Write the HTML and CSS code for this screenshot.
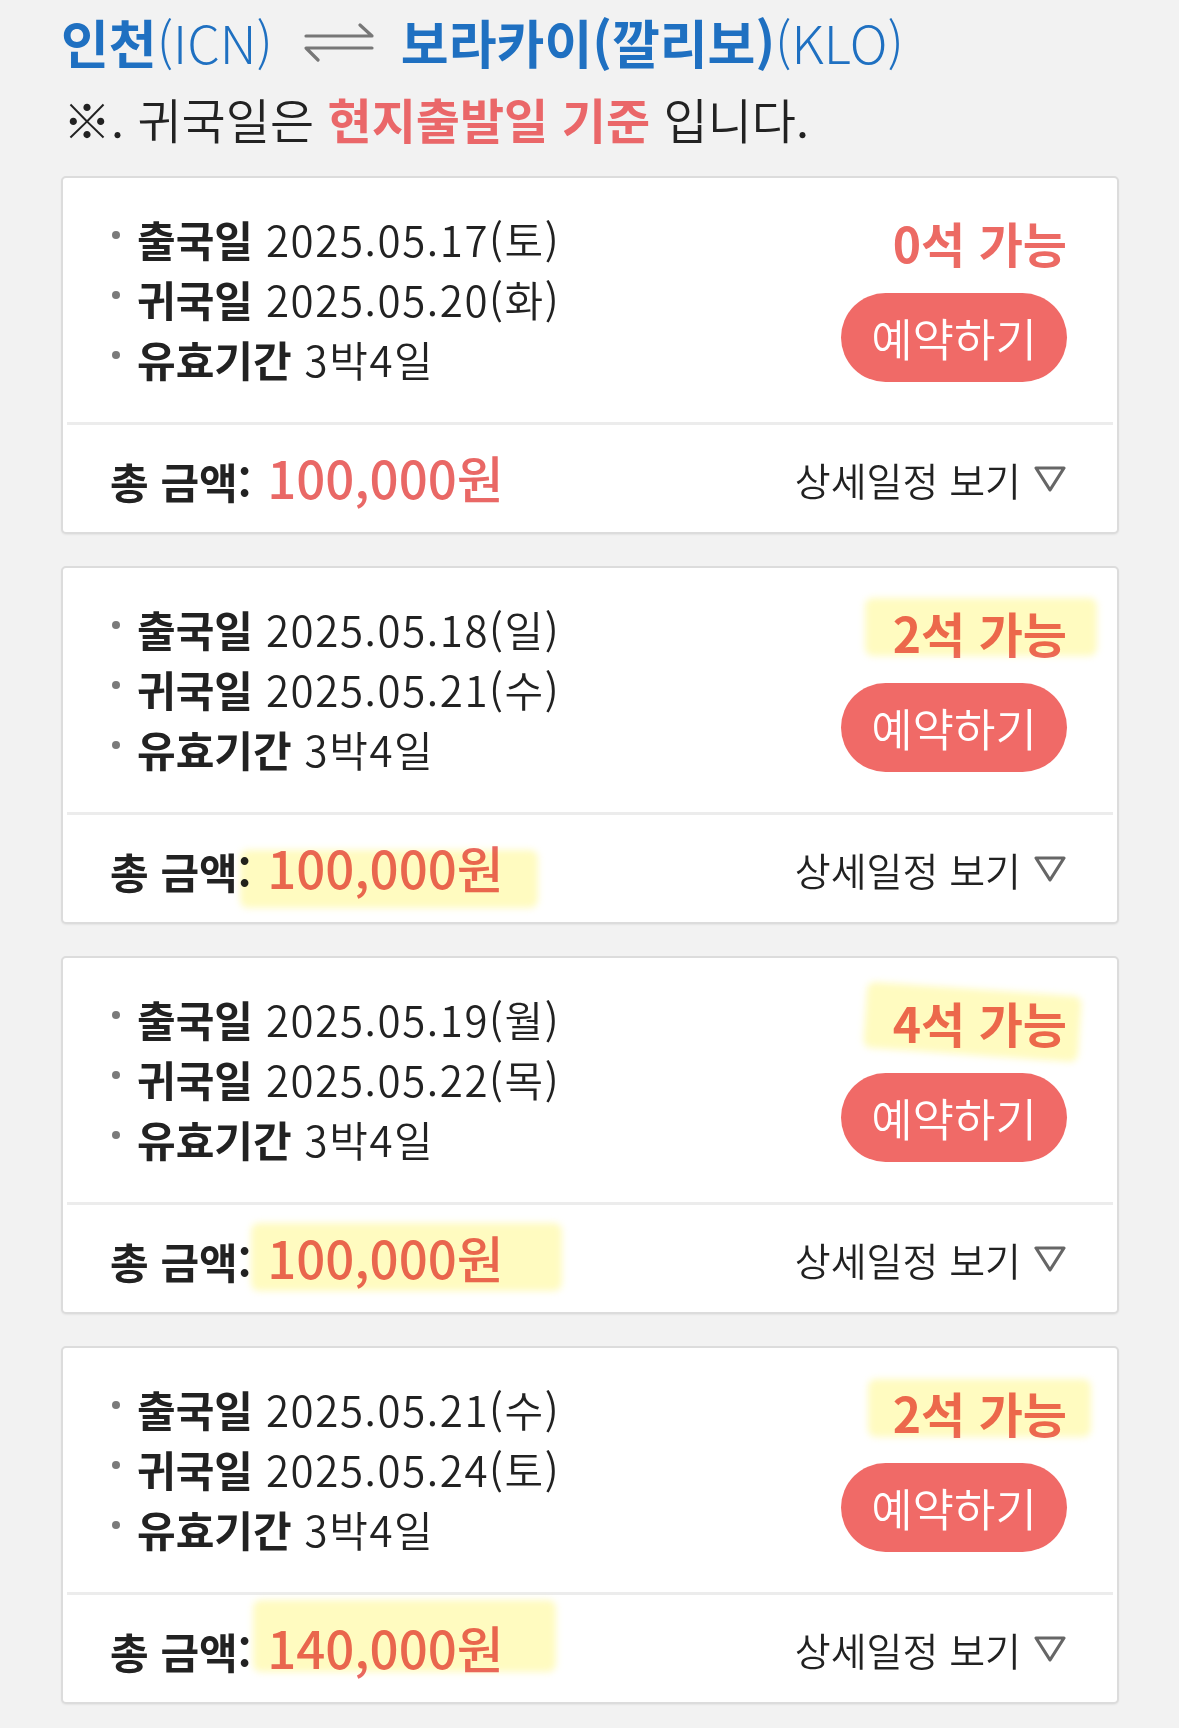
FILE: index.html
```html
<!DOCTYPE html>
<html lang="ko">
<head>
<meta charset="utf-8">
<title>인천 ⇌ 보라카이</title>
<link rel="stylesheet" href="styles.css">
</head>
<body>
<div class="page">
  <header class="head">
    <h1 class="route">
      <b>인천</b><span class="code">(ICN)</span>
      <svg class="swap" viewBox="0 0 70 40" width="70" height="40" aria-hidden="true"><path d="M2 14 H68 L56 3 M68 26 H2 L14 38" fill="none" stroke="#777" stroke-width="3.2" stroke-linecap="round" stroke-linejoin="round"/></svg>
      <b>보라카이(깔리보)</b><span class="code">(KLO)</span>
    </h1>
    <p class="note">※. 귀국일은 <strong>현지출발일 기준</strong> 입니다.</p>
  </header>

  <section class="card">
    <div class="card-top">
      <ul class="info">
        <li><i class="dot"></i><b>출국일</b><span class="val">2025.05.17(토)</span></li>
        <li><i class="dot"></i><b>귀국일</b><span class="val">2025.05.20(화)</span></li>
        <li><i class="dot"></i><b>유효기간</b><span class="val">3박4일</span></li>
      </ul>
      <div class="side">
        <span class="seats">0석 가능</span>
        <button class="book">예약하기</button>
      </div>
    </div>
    <div class="divider"></div>
    <div class="card-foot">
      <div class="total"><b>총 금액:</b> <span class="price">100,000원</span></div>
      <div class="detail">상세일정 보기 <svg class="tri" viewBox="0 0 34 28" width="34" height="28" aria-hidden="true"><path d="M3 3 H31 L17 25 Z" fill="none" stroke="#666" stroke-width="3.2" stroke-linejoin="round"/></svg></div>
    </div>
  </section>

  <section class="card">
    <div class="card-top">
      <ul class="info">
        <li><i class="dot"></i><b>출국일</b><span class="val">2025.05.18(일)</span></li>
        <li><i class="dot"></i><b>귀국일</b><span class="val">2025.05.21(수)</span></li>
        <li><i class="dot"></i><b>유효기간</b><span class="val">3박4일</span></li>
      </ul>
      <div class="side">
        <span class="seats">2석 가능<i class="mark" style="left:-28px;top:-9px;width:232px;height:58px"></i></span>
        <button class="book">예약하기</button>
      </div>
    </div>
    <div class="divider"></div>
    <div class="card-foot">
      <div class="total"><b>총 금액:</b> <span class="price">100,000원<i class="mark" style="left:-27px;top:8px;width:298px;height:58px"></i></span></div>
      <div class="detail">상세일정 보기 <svg class="tri" viewBox="0 0 34 28" width="34" height="28" aria-hidden="true"><path d="M3 3 H31 L17 25 Z" fill="none" stroke="#666" stroke-width="3.2" stroke-linejoin="round"/></svg></div>
    </div>
  </section>

  <section class="card">
    <div class="card-top">
      <ul class="info">
        <li><i class="dot"></i><b>출국일</b><span class="val">2025.05.19(월)</span></li>
        <li><i class="dot"></i><b>귀국일</b><span class="val">2025.05.22(목)</span></li>
        <li><i class="dot"></i><b>유효기간</b><span class="val">3박4일</span></li>
      </ul>
      <div class="side">
        <span class="seats">4석 가능<i class="mark tilt" style="left:-28px;top:-8px;width:215px;height:66px"></i></span>
        <button class="book">예약하기</button>
      </div>
    </div>
    <div class="divider"></div>
    <div class="card-foot">
      <div class="total"><b>총 금액:</b> <span class="price">100,000원<i class="mark" style="left:-16px;top:-9px;width:311px;height:68px"></i></span></div>
      <div class="detail">상세일정 보기 <svg class="tri" viewBox="0 0 34 28" width="34" height="28" aria-hidden="true"><path d="M3 3 H31 L17 25 Z" fill="none" stroke="#666" stroke-width="3.2" stroke-linejoin="round"/></svg></div>
    </div>
  </section>

  <section class="card">
    <div class="card-top">
      <ul class="info">
        <li><i class="dot"></i><b>출국일</b><span class="val">2025.05.21(수)</span></li>
        <li><i class="dot"></i><b>귀국일</b><span class="val">2025.05.24(토)</span></li>
        <li><i class="dot"></i><b>유효기간</b><span class="val">3박4일</span></li>
      </ul>
      <div class="side">
        <span class="seats">2석 가능<i class="mark" style="left:-25px;top:-8px;width:223px;height:58px"></i></span>
        <button class="book">예약하기</button>
      </div>
    </div>
    <div class="divider"></div>
    <div class="card-foot">
      <div class="total"><b>총 금액:</b> <span class="price">140,000원<i class="mark" style="left:-14px;top:-22px;width:303px;height:72px"></i></span></div>
      <div class="detail">상세일정 보기 <svg class="tri" viewBox="0 0 34 28" width="34" height="28" aria-hidden="true"><path d="M3 3 H31 L17 25 Z" fill="none" stroke="#666" stroke-width="3.2" stroke-linejoin="round"/></svg></div>
    </div>
  </section>
</div>
</body>
</html>
```

FILE: styles.css
```css
* { box-sizing: border-box; }

html, body {
  margin: 0;
  padding: 0;
  background: #f2f2f2;
}

body {
  font-family: "Noto Sans CJK KR", "Noto Sans", sans-serif;
  color: #222;
}

.page {
  padding: 12px 60px 24px 61px;
}

.head {
  margin: 0;
}

.route {
  margin: 0;
  font-size: 52px;
  line-height: 60px;
  font-weight: 400;
  color: #1f70c1;
  display: flex;
  align-items: center;
  white-space: nowrap;
}

.route b {
  font-weight: 700;
}

.route .code {
  font-weight: 300;
}

.swap {
  margin: 0 27px 0 31px;
  flex: none;
}

.note {
  margin: 16px 0 0 2px;
  font-size: 48px;
  line-height: 60px;
  color: #222;
  font-weight: 350;
}

.note strong {
  color: #ea6769;
  font-weight: 700;
}

.card {
  margin-top: 28px;
  background: #fff;
  border: 2px solid #dcdcdc;
  border-radius: 5px;
  box-shadow: 0 1px 2px rgba(0, 0, 0, 0.06);
}

.card + .card {
  margin-top: 32px;
}

.card-top {
  display: flex;
  justify-content: space-between;
  padding: 31px 50px 33px 49px;
}

.info {
  list-style: none;
  margin: 0;
  padding: 0;
  font-size: 42px;
  line-height: 60px;
  color: #222;
}

.info li {
  display: flex;
  align-items: center;
  white-space: nowrap;
}

.info b {
  font-weight: 700;
}

.val {
  margin-left: 13px;
  font-weight: 350;
  letter-spacing: 1.6px;
}

.dot {
  width: 8px;
  height: 8px;
  border-radius: 50%;
  background: #7a7a7a;
  margin: -8px 17px 0 0;
  flex: none;
}

.side {
  display: flex;
  flex-direction: column;
  align-items: flex-end;
}

.seats {
  position: relative;
  margin-top: 8px;
  font-size: 48px;
  line-height: 50px;
  font-weight: 700;
  color: #ec6a64;
}

.book {
  margin-top: 26px;
  width: 226px;
  height: 89px;
  border: none;
  border-radius: 45px;
  background: #f06a67;
  color: #fff;
  font-family: inherit;
  font-size: 45px;
  font-weight: 350;
  padding: 0;
  line-height: 89px;
}

.divider {
  height: 3px;
  margin: 0 4px;
  background: #ececec;
}

.card-foot {
  height: 107px;
  display: flex;
  align-items: center;
  justify-content: space-between;
  padding: 0 50px 0 47px;
}

.total {
  font-size: 42px;
  line-height: 50px;
  white-space: nowrap;
}

.total b {
  font-weight: 700;
}

.price {
  position: relative;
  display: inline-block;
  font-size: 51px;
  font-weight: 500;
  color: #e96866;
  margin-left: 4px;
}

.detail {
  font-size: 39px;
  line-height: 50px;
  color: #222;
  font-weight: 350;
  display: flex;
  align-items: center;
}

.tri {
  margin-left: 12px;
}

.mark {
  position: absolute;
  display: block;
  background: rgba(255, 247, 140, 0.55);
  mix-blend-mode: multiply;
  border-radius: 8px;
  filter: blur(3.5px);
  pointer-events: none;
}

.mark.tilt {
  transform: rotate(4deg);
}
```
